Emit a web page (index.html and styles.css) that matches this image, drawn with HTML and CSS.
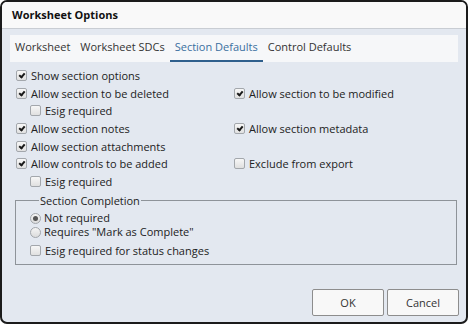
FILE: index.html
```html
<!DOCTYPE html>
<html lang="en">
<head>
    <meta charset="UTF-8">
    <title>Worksheet Options</title>
    <link rel="stylesheet" href="styles.css">
</head>
<body>

<div class="dialog">
    <div class="header">Worksheet Options</div>

    <div class="content">
        <div class="tabs">
            <span class="tab">Worksheet</span>
            <span class="tab">Worksheet SDCs</span>
            <span class="tab active">Section Defaults</span>
            <span class="tab">Control Defaults</span>
        </div>

        <div class="options">
            <label class="opt"><span class="box checked"></span>Show section options</label>
            <div></div>
            <label class="opt"><span class="box checked"></span>Allow section to be deleted</label>
            <label class="opt"><span class="box checked"></span>Allow section to be modified</label>
            <label class="opt sub"><span class="box"></span>Esig required</label>
            <div></div>
            <label class="opt"><span class="box checked"></span>Allow section notes</label>
            <label class="opt"><span class="box checked"></span>Allow section metadata</label>
            <label class="opt"><span class="box checked"></span>Allow section attachments</label>
            <div></div>
            <label class="opt"><span class="box checked"></span>Allow controls to be added</label>
            <label class="opt"><span class="box"></span>Exclude from export</label>
            <label class="opt sub"><span class="box"></span>Esig required</label>
            <div></div>
        </div>

        <fieldset class="completion">
            <legend>Section Completion</legend>
            <label class="radio-row first"><span class="radio on"></span>Not required</label>
            <label class="radio-row"><span class="radio"></span>Requires "Mark as Complete"</label>
            <label class="opt"><span class="box"></span>Esig required for status changes</label>
        </fieldset>
    </div>

    <div class="footer">
        <button class="btn">OK</button>
        <button class="btn">Cancel</button>
    </div>
</div>

</body>
</html>
```

FILE: styles.css
```css
body {
    margin: 0;
    font-family: 'Open Sans', 'Liberation Sans', sans-serif;
    font-size: 11px;
    color: #222;
    background: #fff;
}
.dialog {
    width: 464px;
    height: 320px;
    border: 2px solid #1b1b1b;
    border-radius: 7px;
    background-color: #e3e8f0;
    display: flex;
    flex-direction: column;
    overflow: hidden;
}
.header {
    height: 26px;
    line-height: 25px;
    padding-left: 10px;
    font-size: 11px;
    font-weight: 700;
    color: #111;
    background-color: #f9f9f9;
    border-bottom: 1px solid #c9cdd3;
}
.content {
    padding: 6px 8px 0 8px;
    flex: 1;
}
.tabs {
    display: flex;
    height: 27px;
    background-color: #f6f7f9;
}
.tab {
    padding: 0 5px;
    line-height: 23px;
    color: #333;
    border-bottom: 2px solid transparent;
}
.tab.active {
    color: #3a6f9f;
    border-bottom-color: #2f5f8c;
}
.options {
    display: grid;
    grid-template-columns: 218px 1fr;
    grid-auto-rows: 17.6px;
    margin-top: 5px;
    padding-left: 6px;
}
.opt {
    display: flex;
    align-items: center;
    gap: 4px;
    white-space: nowrap;
}
.sub {
    padding-left: 14px;
}
.box {
    width: 9px;
    height: 9px;
    border: 1px solid #a3a7ac;
    border-radius: 2px;
    background: linear-gradient(#f7f7f7, #e0e0e0);
    position: relative;
    flex: none;
}
.box.checked::after {
    content: "";
    position: absolute;
    left: 3px;
    top: 1px;
    width: 2px;
    height: 4px;
    border: solid #1a1a1a;
    border-width: 0 2px 2px 0;
    transform: rotate(40deg);
}
.completion {
    margin: 3px 1px 0 5px;
    padding: 0 0 5px 14px;
    border: 1px solid #8e9399;
}
.completion legend {
    padding: 0 1px;
    margin-left: 9px;
    line-height: 15px;
}
.radio-row {
    display: flex;
    align-items: center;
    gap: 3px;
    height: 14px;
    line-height: 14px;
}
.radio-row.first {
    margin-top: 3px;
}
.completion .opt {
    height: 17px;
    padding-top: 3px;
}
.radio {
    width: 9px;
    height: 9px;
    border: 1px solid #a2a6ab;
    border-radius: 50%;
    background: linear-gradient(#f4f4f4, #dcdcdc);
    position: relative;
    flex: none;
}
.radio.on::after {
    content: "";
    position: absolute;
    left: 2px;
    top: 2px;
    width: 5px;
    height: 5px;
    border-radius: 50%;
    background: #555;
}
.footer {
    display: flex;
    justify-content: flex-end;
    gap: 3px;
    padding: 0 7px 6px 0;
}
.btn {
    width: 72px;
    height: 27px;
    font-family: inherit;
    font-size: 11px;
    color: #333;
    background-color: #f8f8f8;
    border: 1px solid #8d8d8d;
    border-radius: 2px;
}
```
